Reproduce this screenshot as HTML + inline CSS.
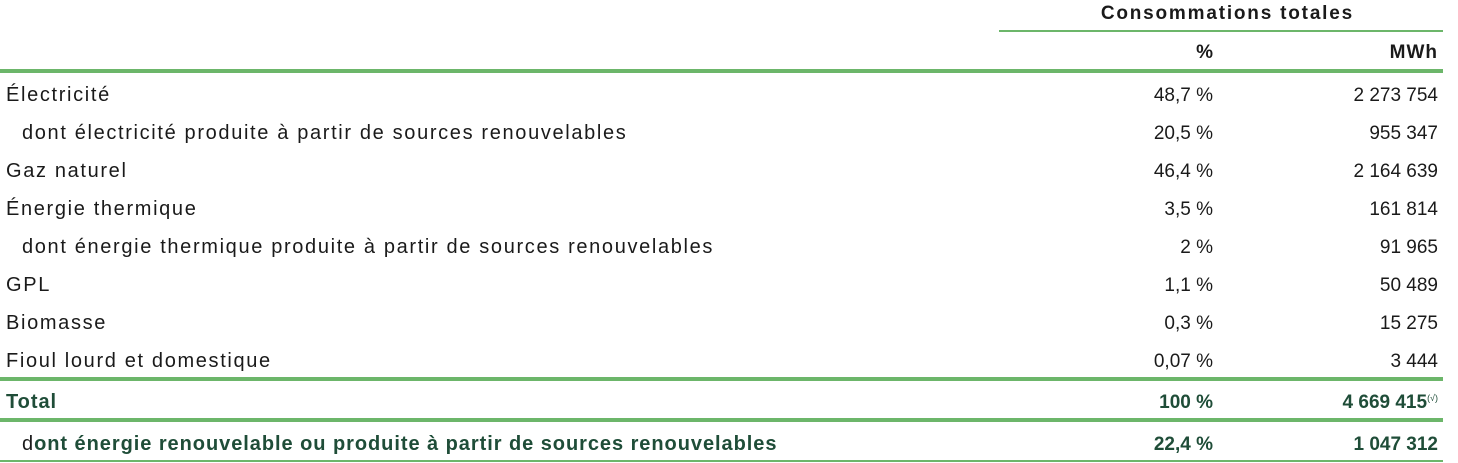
<!DOCTYPE html>
<html><head><meta charset="utf-8"><style>
body{margin:0;width:1458px;height:463px;background:#fff;font-family:"Liberation Sans",sans-serif;color:#1a1a1a;position:relative;overflow:hidden}
.t{position:absolute;font-size:19px;white-space:nowrap;line-height:22px;margin-top:2px}
.l{letter-spacing:1.65px;font-size:20px;margin-top:1px}
.lb{letter-spacing:0.95px;font-size:20px;margin-top:1px}
.r{text-align:right}
.b{font-weight:bold}
.g{color:#1f4d38}
.ln{position:absolute;background:#6cb66a}
sup{font-size:9px;font-weight:normal;position:relative;top:-7px;vertical-align:baseline;line-height:0}
</style></head><body>
<div class="t b r" style="right:104px;top:1px;width:400px;letter-spacing:1.8px">Consommations totales</div>
<div class="ln" style="left:999px;width:444px;top:30px;height:2px"></div>
<div class="t b r" style="right:245px;top:40px">%</div>
<div class="t b r" style="right:20px;top:40px;letter-spacing:1px">MWh</div>
<div class="ln" style="left:0;width:1443px;top:69px;height:4px"></div>

<div class="t l" style="left:6px;top:83px">Électricité</div>
<div class="t r" style="right:245px;top:83px">48,7 %</div>
<div class="t r" style="right:20px;top:83px">2 273 754</div>

<div class="t l" style="left:22px;top:121px">dont électricité produite à partir de sources renouvelables</div>
<div class="t r" style="right:245px;top:121px">20,5 %</div>
<div class="t r" style="right:20px;top:121px">955 347</div>

<div class="t l" style="left:6px;top:159px">Gaz naturel</div>
<div class="t r" style="right:245px;top:159px">46,4 %</div>
<div class="t r" style="right:20px;top:159px">2 164 639</div>

<div class="t l" style="left:6px;top:197px">Énergie thermique</div>
<div class="t r" style="right:245px;top:197px">3,5 %</div>
<div class="t r" style="right:20px;top:197px">161 814</div>

<div class="t l" style="left:22px;top:235px">dont énergie thermique produite à partir de sources renouvelables</div>
<div class="t r" style="right:245px;top:235px">2 %</div>
<div class="t r" style="right:20px;top:235px">91 965</div>

<div class="t l" style="left:6px;top:273px">GPL</div>
<div class="t r" style="right:245px;top:273px">1,1 %</div>
<div class="t r" style="right:20px;top:273px">50 489</div>

<div class="t l" style="left:6px;top:311px">Biomasse</div>
<div class="t r" style="right:245px;top:311px">0,3 %</div>
<div class="t r" style="right:20px;top:311px">15 275</div>

<div class="t l" style="left:6px;top:349px">Fioul lourd et domestique</div>
<div class="t r" style="right:245px;top:349px">0,07 %</div>
<div class="t r" style="right:20px;top:349px">3 444</div>

<div class="ln" style="left:0;width:1443px;top:377px;height:4px"></div>
<div class="t b g lb" style="left:6px;top:390px">Total</div>
<div class="t b g r" style="right:245px;top:390px">100 %</div>
<div class="t b g r" style="right:20px;top:390px">4 669 415<sup>(√)</sup></div>
<div class="ln" style="left:0;width:1443px;top:418px;height:4px"></div>
<div class="t b g lb" style="left:22px;top:432px"><span style="color:#1a1a1a;font-weight:normal">d</span>ont énergie renouvelable ou produite à partir de sources renouvelables</div>
<div class="t b g r" style="right:245px;top:432px">22,4 %</div>
<div class="t b g r" style="right:20px;top:432px">1 047 312</div>
<div class="ln" style="left:0;width:1443px;top:460px;height:2px"></div>
</body></html>
